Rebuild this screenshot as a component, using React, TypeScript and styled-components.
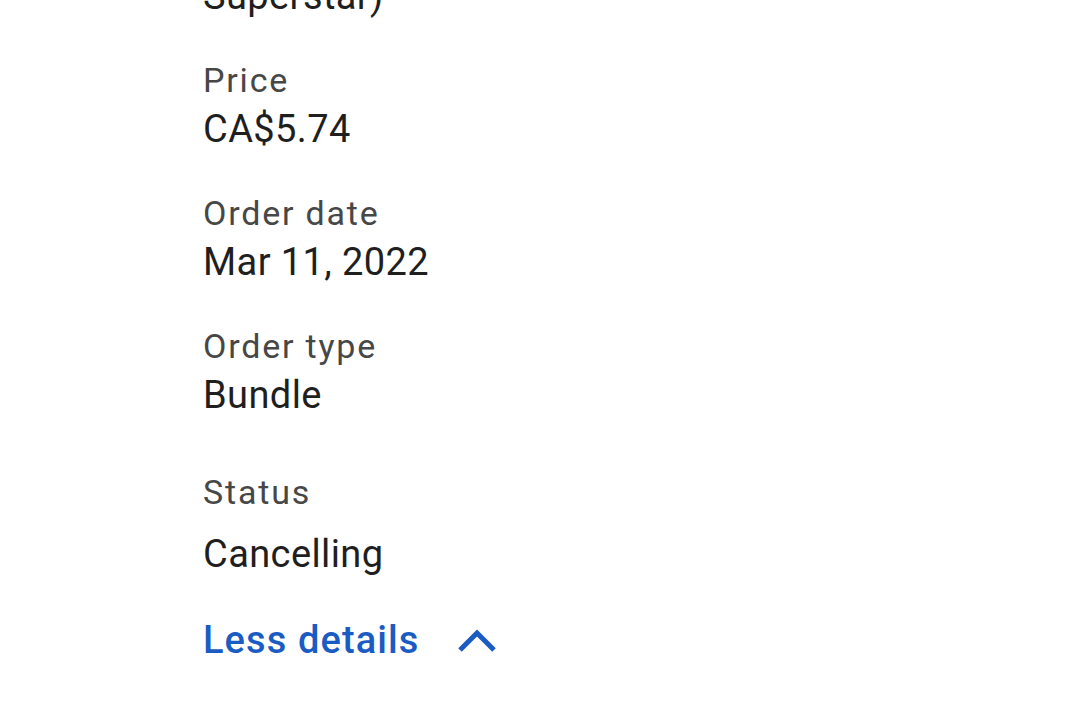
import React from "react";
import styled, { createGlobalStyle } from "styled-components";

const Global = createGlobalStyle`
  html, body { margin: 0; padding: 0; background: #ffffff; }
  body { font-family: Roboto, "Noto Sans", sans-serif; overflow: hidden; }
`;

const Page = styled.main`
  width: 1080px;
  height: 711px;
  overflow: hidden;
  background: #ffffff;
`;

const Details = styled.section`
  display: flex;
  flex-direction: column;
  padding-left: 203px;
  margin-top: -28px;
`;

const Field = styled.div<{ $extra?: number }>`
  display: flex;
  flex-direction: column;
  gap: ${(p) => 5 + (p.$extra ?? 0)}px;
  margin-top: ${(p) => 40 + (p.$extra ?? 0)}px;
  &:first-child { margin-top: 0; }
`;

const Label = styled.div`
  font-size: 34px;
  line-height: 40px;
  color: #474747;
  letter-spacing: 1.8px;
`;

const Value = styled.div`
  font-size: 38px;
  line-height: 48px;
  color: #1f1f1f;
  letter-spacing: 0.4px;
`;

const Toggle = styled.button`
  display: flex;
  align-items: center;
  gap: 38px;
  margin-top: 38px;
  padding: 0;
  border: none;
  background: none;
  cursor: pointer;
  font-family: Roboto, "Noto Sans", sans-serif;
  font-size: 38px;
  line-height: 48px;
  font-weight: 500;
  letter-spacing: 1.1px;
  color: #1a5bc4;
  align-self: flex-start;
`;

const Chevron = () => (
  <svg width="40" height="28" viewBox="0 0 40 28" aria-hidden="true">
    <path d="M3 24 L20 7 L37 24" fill="none" stroke="#1a5bc4" strokeWidth="5" />
  </svg>
);

export default function App() {
  return (
    <Page>
      <Global />
      <Details>
        <Field>
          <Value>Superstar)</Value>
        </Field>
        <Field>
          <Label>Price</Label>
          <Value>CA$5.74</Value>
        </Field>
        <Field>
          <Label>Order date</Label>
          <Value>Mar 11, 2022</Value>
        </Field>
        <Field>
          <Label>Order type</Label>
          <Value>Bundle</Value>
        </Field>
        <Field $extra={13}>
          <Label>Status</Label>
          <Value>Cancelling</Value>
        </Field>
        <Toggle>
          Less details
          <Chevron />
        </Toggle>
      </Details>
    </Page>
  );
}
